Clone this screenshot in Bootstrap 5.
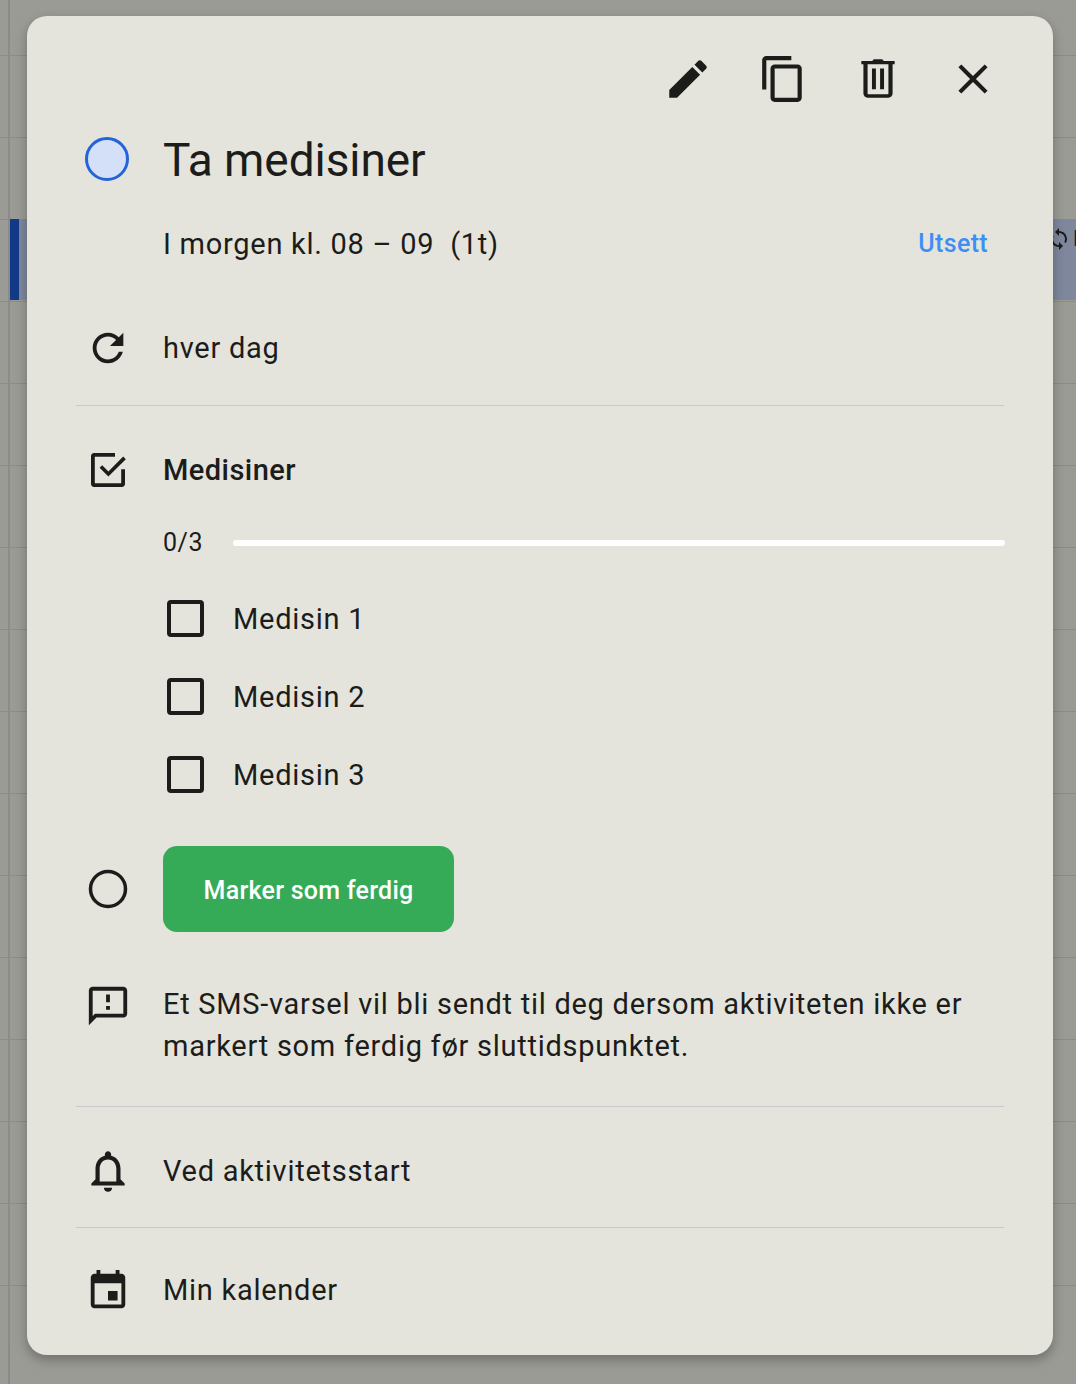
<!DOCTYPE html>
<html lang="no">
<head>
    <meta charset="UTF-8">
    <meta name="viewport" content="width=device-width, initial-scale=1.0">
    <title>Ta medisiner</title>
    <link href="https://cdn.jsdelivr.net/npm/bootstrap@5.3.0/dist/css/bootstrap.min.css" rel="stylesheet">
    <style>
        html, body {
            height: 100%;
            overflow: hidden;
        }
        body {
            font-family: Roboto, "Liberation Sans", sans-serif;
            color: #1c1c1a;
            background-color: #9a9b95;
        }
        /* calendar behind the dialog */
        .cal-back {
            position: relative;
            height: 1384px;
            padding: 16px 23px 0 27px;
            background-image:
                linear-gradient(#8b8b8d, #8b8b8d),
                repeating-linear-gradient(to bottom, transparent 0, transparent 81px, #8b8b8d 81px, #8b8b8d 82px);
            background-size: 2px 100%, 100% 100%;
            background-position: 8px 0, 0 -26px;
            background-repeat: no-repeat;
        }
        .cal-event {
            position: absolute;
            top: 219px;
            left: 10px;
            width: 1066px;
            height: 81px;
            background-color: #7e879c;
            border-left: 9px solid #123a86;
        }
        .cal-event-icon {
            position: absolute;
            top: 8px;
            left: 1028px;
            width: 24px;
            height: 24px;
            fill: #1c1c1a;
        }
        .cal-event-text {
            position: absolute;
            top: 6px;
            left: 1054px;
            font-size: 22px;
            line-height: 28px;
            color: #1c1c1a;
        }
        .dialog-box {
            position: relative;
            height: 1339px;
            padding: 34px 49px 0;
            background-color: #e4e4dc;
            border-radius: 20px;
            box-shadow: 0 5px 12px rgba(0, 0, 0, .28);
            letter-spacing: .73px;
        }
        .tool-bar {
            height: 58px;
            padding-right: 6px;
            gap: 45px;
        }
        .tool-btn {
            width: 50px;
            height: 50px;
            padding: 0;
            border: 0;
            background: none;
            line-height: 0;
        }
        .tool-btn .ico {
            width: 50px;
            height: 50px;
        }
        .rail {
            flex: 0 0 87px;
            padding-left: 9px;
            line-height: 0;
        }
        .ico {
            width: 46px;
            height: 46px;
            fill: #1c1c1a;
        }
        .ico-bell {
            width: 50px;
            height: 50px;
            margin-left: -2px;
        }
        .ico-task {
            width: 48px;
            height: 48px;
            margin-left: -1px;
        }
        .ico-cal { transform: translateY(1px); }
        .info-row {
            font-size: 29px;
            line-height: 42px;
        }
        .title-row { height: 56px; margin-top: 24px; }
        .title-text {
            font-size: 46px;
            font-weight: 400;
            letter-spacing: -.08px;
            margin: 2px 0 0;
        }
        .status-ring {
            display: block;
            width: 44px;
            height: 44px;
            margin-top: -2px;
            border: 3.5px solid #2563d8;
            border-radius: 50%;
            background-color: #d3e0f8;
        }
        .time-row { height: 60px; margin-top: 25px; padding-top: 1px; }
        .later-link {
            font-size: 25px;
            font-weight: 500;
            letter-spacing: .35px;
            padding-right: 16px;
            color: #3f8ef5;
            text-decoration: none;
        }
        .repeat-row { height: 60px; margin-top: 45px; }
        .thin-rule {
            margin: 0;
            border: 0;
            border-top: 1px solid #c9c9cc;
            opacity: 1;
        }
        .repeat-rule { margin-top: 27px; }
        .list-head { height: 60px; margin-top: 34px; }
        .list-title { font-weight: 500; letter-spacing: .45px; }
        .count-row { height: 30px; margin-top: 28px; padding-left: 87px; }
        .count-text { flex: 0 0 70px; font-size: 25px; letter-spacing: .55px; }
        .count-bar {
            flex: 1;
            height: 6px;
            margin-right: -1px;
            background-color: #fff;
            border-radius: 3px;
        }
        .med-list { padding-left: 91px; margin-top: 22px; }
        .med-item { height: 78px; }
        .med-item .form-check-input {
            flex: 0 0 37px;
            width: 37px;
            height: 37px;
            margin: -2px 29px 0 0;
            background-color: transparent;
            border: 4px solid #1c1c1a;
            border-radius: 4px;
        }
        .done-row { margin-top: 32px; }
        .done-btn {
            width: 291px;
            height: 86px;
            padding-top: 10px;
            font-size: 25px;
            font-weight: 500;
            letter-spacing: .25px;
            border: 0;
            border-radius: 14px;
            background-color: #35ab57;
            color: #fff;
        }
        .sms-row { margin-top: 51px; }
        .alert-rule { margin-top: 39px; }
        .alert-row { height: 60px; margin-top: 34px; }
        .alert-rule-b { margin-top: 26px; }
        .cal-row { height: 60px; margin-top: 32px; }
    </style>
</head>
<body>
    <div class="cal-back">
        <div class="cal-event">
            <svg class="cal-event-icon" viewBox="0 0 24 24"><path d="M12 4V1L8 5l4 4V6c3.310 0 6 2.690 6 6 0 1.010-.25 1.970-.7 2.800l1.460 1.460C19.540 15.030 20 13.570 20 12c0-4.420-3.580-8-8-8zm0 14c-3.310 0-6-2.690-6-6 0-1.010.25-1.970.7-2.800L5.240 7.740C4.460 8.970 4 10.430 4 12c0 4.420 3.580 8 8 8v3l4-4-4-4v3z"/></svg>
            <span class="cal-event-text">L</span>
        </div>

        <div class="dialog-box">
            <!-- Toolbar -->
            <div class="tool-bar d-flex justify-content-end align-items-center">
                <button class="tool-btn" type="button" aria-label="Rediger">
                    <svg class="ico" viewBox="0 0 24 24"><path d="M3 17.250V21h3.750L17.810 9.940l-3.750-3.750L3 17.250zM20.710 7.040c.39-.39.39-1.020 0-1.410l-2.340-2.340c-.39-.39-1.020-.39-1.410 0l-1.830 1.830 3.750 3.750 1.830-1.830z"/></svg>
                </button>
                <button class="tool-btn" type="button" aria-label="Kopier">
                    <svg class="ico" viewBox="0 0 24 24"><path d="M16 1H4c-1.100 0-2 .9-2 2v14h2V3h12V1zm3 4H8c-1.100 0-2 .9-2 2v14c0 1.100.9 2 2 2h11c1.100 0 2-.9 2-2V7c0-1.100-.9-2-2-2zm0 16H8V7h11v14z"/></svg>
                </button>
                <button class="tool-btn" type="button" aria-label="Slett">
                    <svg class="ico" viewBox="0 0 24 24"><path d="M10 2.500h4l.8.8H20v1.600h-1V19c0 1.100-.9 2-2 2H7c-1.100 0-2-.9-2-2V4.900H4V3.300h5.200l.8-.8zM7 4.900V19c0 .2.1.3.3.3h9.400c.2 0 .3-.1.3-.3V4.900H7zm2.100 2h1.900v10H9.100v-10zm3.900 0h1.900v10H13v-10z"/></svg>
                </button>
                <button class="tool-btn" type="button" aria-label="Lukk">
                    <svg class="ico" viewBox="0 0 24 24"><path d="M19 6.410L17.590 5 12 10.590 6.410 5 5 6.410 10.590 12 5 17.590 6.410 19 12 13.410 17.590 19 19 17.590 13.410 12z"/></svg>
                </button>
            </div>

            <!-- Title -->
            <div class="title-row d-flex align-items-center">
                <div class="rail"><span class="status-ring"></span></div>
                <h1 class="title-text">Ta medisiner</h1>
            </div>

            <!-- Time -->
            <div class="time-row info-row d-flex align-items-center">
                <div class="rail"></div>
                <div class="flex-grow-1">I morgen kl. 08 – 09&nbsp; (1t)</div>
                <a class="later-link" href="#">Utsett</a>
            </div>

            <!-- Repeat -->
            <div class="repeat-row info-row d-flex align-items-center">
                <div class="rail">
                    <svg class="ico" viewBox="0 0 24 24"><path d="M17.650 6.350C16.200 4.900 14.210 4 12 4c-4.420 0-7.990 3.580-7.990 8s3.570 8 7.990 8c3.730 0 6.840-2.550 7.730-6h-2.080c-.82 2.330-3.040 4-5.650 4-3.310 0-6-2.690-6-6s2.690-6 6-6c1.660 0 3.140.69 4.220 1.780L13 11h7V4l-2.350 2.350z"/></svg>
                </div>
                <div>hver dag</div>
            </div>
            <hr class="thin-rule repeat-rule">

            <!-- Checklist -->
            <div class="list-head info-row d-flex align-items-center">
                <div class="rail">
                    <svg class="ico ico-task" viewBox="0 0 24 24"><path d="M5 3.500h10.500v1.900H5.400v13.200h13.200v-7h1.900V19c0 .8-.7 1.500-1.500 1.500H5c-.8 0-1.500-.7-1.500-1.500V5c0-.8.7-1.500 1.500-1.500zM19.600 5.300l1.300 1.300-8.700 8.700-4.400-4.400 1.300-1.300 3.100 3.100z"/></svg>
                </div>
                <div class="list-title">Medisiner</div>
            </div>
            <div class="count-row d-flex align-items-center">
                <div class="count-text">0/3</div>
                <div class="count-bar"></div>
            </div>
            <div class="med-list info-row">
                <div class="med-item d-flex align-items-center"><input class="form-check-input" type="checkbox" aria-label="Medisin 1"><span>Medisin 1</span></div>
                <div class="med-item d-flex align-items-center"><input class="form-check-input" type="checkbox" aria-label="Medisin 2"><span>Medisin 2</span></div>
                <div class="med-item d-flex align-items-center"><input class="form-check-input" type="checkbox" aria-label="Medisin 3"><span>Medisin 3</span></div>
            </div>

            <!-- Mark done -->
            <div class="done-row d-flex align-items-center">
                <div class="rail">
                    <svg class="ico" viewBox="0 0 46 46"><circle cx="23" cy="23" r="17.500" fill="none" stroke="#1c1c1a" stroke-width="3.500"/></svg>
                </div>
                <button class="btn done-btn" type="button">Marker som ferdig</button>
            </div>

            <!-- SMS note -->
            <div class="sms-row info-row d-flex">
                <div class="rail">
                    <svg class="ico" viewBox="0 0 24 24"><path d="M20 2H4c-1.100 0-1.990.9-1.990 2L2 22l4-4h14c1.100 0 2-.9 2-2V4c0-1.100-.9-2-2-2zm0 14H5.170L4 17.170V4h16v12zM11 12h2v2h-2zm0-6h2v4h-2z"/></svg>
                </div>
                <div>Et SMS-varsel vil bli sendt til deg dersom aktiviteten ikke er markert som ferdig før sluttidspunktet.</div>
            </div>
            <hr class="thin-rule alert-rule">

            <!-- Alert -->
            <div class="alert-row info-row d-flex align-items-center">
                <div class="rail">
                    <svg class="ico ico-bell" viewBox="0 0 24 24"><path d="M12 22c1.100 0 2-.9 2-2h-4c0 1.100.9 2 2 2zm6-6v-5c0-3.070-1.630-5.640-4.500-6.320V4c0-.83-.67-1.500-1.500-1.500s-1.500.67-1.500 1.500v.68C7.640 5.360 6 7.920 6 11v5l-2 2v1h16v-1l-2-2zm-2 1H8v-6c0-2.480 1.510-4.500 4-4.500s4 2.020 4 4.500v6z"/></svg>
                </div>
                <div>Ved aktivitetsstart</div>
            </div>
            <hr class="thin-rule alert-rule-b">

            <!-- Calendar -->
            <div class="cal-row info-row d-flex align-items-center">
                <div class="rail">
                    <svg class="ico ico-cal" viewBox="0 0 24 24"><path d="M17 12h-5v5h5v-5zM16 1v2H8V1H6v2H5c-1.110 0-1.990.9-1.990 2L3 19c0 1.100.89 2 2 2h14c1.100 0 2-.9 2-2V5c0-1.100-.9-2-2-2h-1V1h-2zm3 18H5V8h14v11z"/></svg>
                </div>
                <div>Min kalender</div>
            </div>
        </div>
    </div>

    <script src="https://cdn.jsdelivr.net/npm/bootstrap@5.3.0/dist/js/bootstrap.bundle.min.js"></script>
</body>
</html>
